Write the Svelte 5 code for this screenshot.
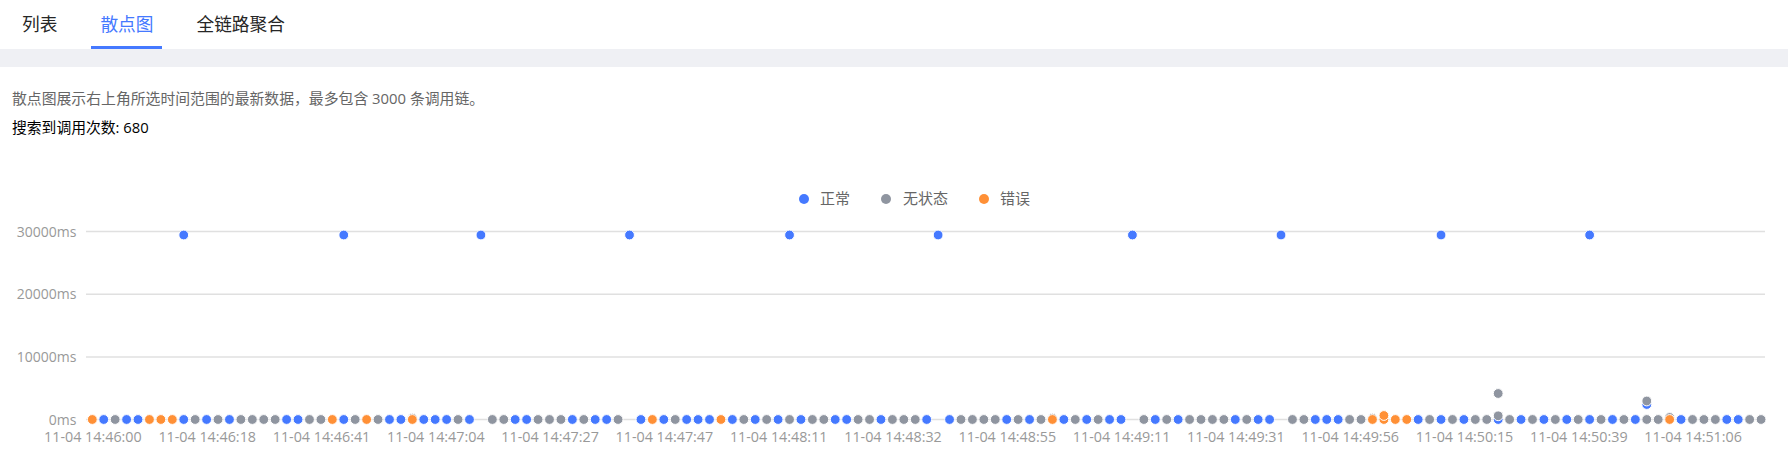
<script lang="ts">
  const tabs = ['列表', '散点图', '全链路聚合']
  const active = '散点图'

  const BLUE = '#4579ff'
  const GREY = '#8f95a0'
  const ORANGE = '#ff9036'
  const colors = { B: BLUE, G: GREY, O: ORANGE }

  // one char per column on the 0ms row, _ = nothing there
  const row =
    'OBGBBOOOBGBGBGGGGBBGGOBGOGBBOBBBGB_GGBBGGGBGBBG_BOBGBBBOBGBGBGBGGBBGGBGGGB_' +
    'BGGGGBGBGOBGBGBB_GBGBGGGGBGBB_GGBBBGGOOOOBGBGBGGBGBGBGBGBGBGBGGOBGGGBBGG'

  const X0 = 92.3
  const STEP = 11.43
  const xAt = (i: number) => X0 + i * STEP

  const gridY = [231.5, 294.3, 357, 419.5]
  const yLabels = ['30000ms', '20000ms', '10000ms', '0ms']
  const xLabels = [
    '14:46:00', '14:46:18', '14:46:41', '14:47:04', '14:47:27',
    '14:47:47', '14:48:11', '14:48:32', '14:48:55', '14:49:11',
    '14:49:31', '14:49:56', '14:50:15', '14:50:39', '14:51:06',
  ]

  const base = [...row].map((c, i) => ({ i, c, y: 419.5 })).filter(p => p.c !== '_')
  const top = [8, 22, 34, 47, 61, 74, 91, 104, 118, 131].map(i => ({ i, c: 'B', y: 235 }))
  const extra = [
    { i: 136, c: 'B', y: 404.5 },
    { i: 28, c: 'G', y: 418.2 },
    { i: 84, c: 'G', y: 418.2 },
    { i: 112, c: 'G', y: 418.2 },
    { i: 138, c: 'G', y: 417.5 },
    { i: 123, c: 'G', y: 393.5 },
    { i: 123, c: 'G', y: 415.8 },
    { i: 136, c: 'G', y: 401 },
    { i: 113, c: 'O', y: 415.5 },
  ]

  // same paint order as the series: blue, grey, then orange
  const rank = { B: 0, G: 1, O: 2 }
  const points = [...base, ...top, ...extra].sort((a, b) => rank[a.c] - rank[b.c])

  const legend = [
    { label: '正常', c: BLUE, dot: 804, text: 820 },
    { label: '无状态', c: GREY, dot: 886, text: 903 },
    { label: '错误', c: ORANGE, dot: 984, text: 1000 },
  ]
</script>

<div class="page">
  <nav class="tabs">
    {#each tabs as tab (tab)}
      <div class="tab" class:active={tab === active}>{tab}</div>
    {/each}
  </nav>
  <div class="band"></div>
  <p class="desc">散点图展示右上角所选时间范围的最新数据，最多包含 3000 条调用链。</p>
  <p class="count">搜索到调用次数: 680</p>
  <svg class="chart" width="1788" height="475" viewBox="0 0 1788 475">
    {#each legend as item (item.label)}
      <circle cx={item.dot} cy="199" r="5" fill={item.c} />
      <text class="legend" x={item.text} y="204">{item.label}</text>
    {/each}
    {#each gridY as y, n (y)}
      <line x1="86" x2="1765" y1={y} y2={y} class="grid" />
      <text class="axis y-axis" x="76.5" y={y + 5} text-anchor="end">{yLabels[n]}</text>
    {/each}
    {#each xLabels as t, n (t)}
      <text class="axis" x={xAt(n * 10) + 0.6} y="442" text-anchor="middle">11-04 {t}</text>
    {/each}
    {#each points as p}
      <circle class="dot" cx={xAt(p.i)} cy={p.y} r="4.9" fill={colors[p.c]} />
    {/each}
  </svg>
</div>

<style>
  :global(body) {
    margin: 0;
    background: #fff;
  }
  .page {
    position: relative;
    width: 1788px;
    height: 475px;
    overflow: hidden;
    font-family: "Open Sans", "Noto Sans CJK SC", sans-serif;
  }
  .tabs {
    display: flex;
    gap: 43px;
    height: 49px;
    padding-left: 22px;
  }
  .tab {
    position: relative;
    font-size: 17.7px;
    line-height: 49px;
    color: #262626;
  }
  .tab.active {
    color: #4579ff;
  }
  .tab.active::after {
    content: '';
    position: absolute;
    left: -9.5px;
    right: -8.5px;
    bottom: 0;
    height: 3px;
    background: #4579ff;
  }
  .band {
    height: 18px;
    background: #eff0f4;
  }
  .desc {
    margin: 20.5px 0 0 12px;
    font-size: 14.85px;
    line-height: 20px;
    color: #666;
  }
  .count {
    margin: 9.5px 0 0 12px;
    font-size: 14.8px;
    line-height: 20px;
    color: #000;
  }
  .chart {
    position: absolute;
    left: 0;
    top: 0;
    pointer-events: none;
  }
  .grid {
    stroke: #e0e0e0;
    stroke-width: 1.5;
  }
  .axis {
    font-size: 14.3px;
    fill: #999;
  }
  .y-axis {
    font-size: 14px;
  }
  .legend {
    font-size: 15px;
    fill: #666;
  }
  .dot {
    stroke: #fff;
    stroke-width: 1;
  }
</style>
